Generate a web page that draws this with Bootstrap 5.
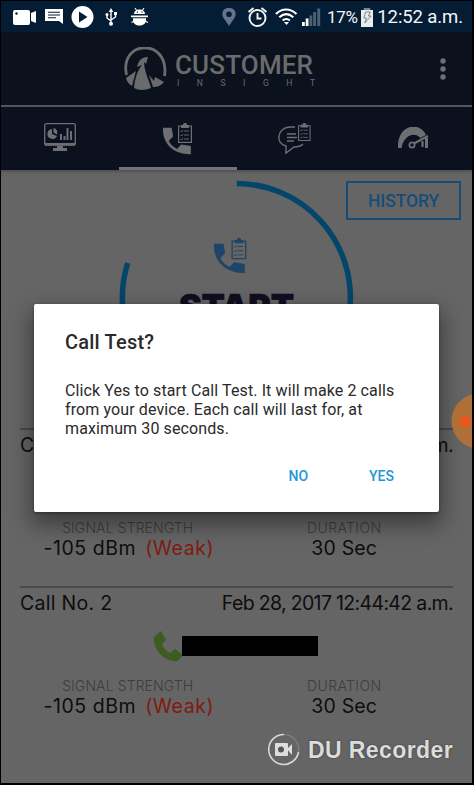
<!DOCTYPE html>
<html lang="en">
<head>
<meta charset="utf-8">
<meta name="viewport" content="width=device-width, initial-scale=1">
<title>Customer Insight</title>
<link href="https://cdn.jsdelivr.net/npm/bootstrap@5.3.0/dist/css/bootstrap.min.css" rel="stylesheet">
<style>
body{background:#000;font-family:Roboto,sans-serif;overflow:hidden}
svg{display:block;flex:none}
.phone{width:474px;height:785px;padding:1px 2px 2px 1px}
.screen{height:782px;background:#656565;overflow:hidden}
.statusbar{height:31px;background:#041d34;color:#f4f6f8;padding:2px 9px 0 12px}
.status-icons{width:314px;height:29px}
.battery-pct{font-size:17px;width:36px;letter-spacing:-.3px}
.clock{font-size:18.5px;letter-spacing:-.1px;white-space:nowrap;margin-left:4px}
.appbar{height:75px;background:#0c121d;border-bottom:2px solid #545a64}
.brand{margin-left:123px;color:#6a6b6d}
.brand-name{font-size:26px;line-height:22px;font-weight:500;letter-spacing:.15px;margin-top:7px}
.brand-sub{font-size:8.5px;line-height:9px;width:138px;margin-left:2px;margin-top:3px}
.tabs{height:63px;background:#0b111e;box-shadow:0 1px 3px #444}
.tabs .tab-item{color:#6d6f73;border-bottom:3px solid transparent}
.tabs .tab-item.active{border-bottom-color:#70737a}
.test-area{height:258px}
.history{width:115px;height:39px;margin:11px 11px 0 0;border:2px solid #154d78;color:#154d78;font-size:17.5px;font-weight:500;border-radius:0;background:none;padding:2px 0 0;letter-spacing:-.1px}
.dial{left:118px;top:10px;width:236px;height:240px}
.dial-label{font:900 34px/34px Inter,sans-serif;color:#0e0e20;top:120px;left:178px;letter-spacing:-.2px;-webkit-text-stroke:.6px #0e0e20}
.record{height:158px;margin:0 19px 0 19px;border-top:2px solid #4a4a4a;font-family:Inter,sans-serif;color:#0d0d0d;font-size:19.5px}
.record-head{height:31px;line-height:31px}
.call-no{letter-spacing:.3px}
.record-head .stamp{font-size:19.5px;letter-spacing:-.66px}
.number-row{height:58px;padding-left:134px}
.redacted{width:136px;height:20px;background:#000;margin-left:-1px}
.metric-label{font-size:14px;line-height:17px;font-weight:300;color:#3d3d3d;letter-spacing:.1px}
.duration .metric-label{letter-spacing:.4px}
.metric-value{line-height:25px;letter-spacing:.15px}
.signal .metric-value{letter-spacing:.55px;padding-left:2px}
.weak{color:#801a12;margin-left:3px}
.signal{width:216px}
.duration{width:218px}
.dialog-box{left:34px;top:304px;width:405px;height:208px;background:#fff;border-radius:2px;padding:26px 31px 0;box-shadow:0 10px 22px 3px rgba(0,0,0,.4),0 1px 3px rgba(0,0,0,.35);color:#2a2a2a}
.dialog-title{font-size:20px;line-height:25px;font-weight:500;margin:0 0 26px;letter-spacing:.2px}
.dialog-text{font-size:16px;line-height:19px;margin:0;white-space:nowrap;letter-spacing:.11px}
.dialog-box .btn{font-size:14px;font-weight:500;color:#2496d8;border:0;border-radius:0;padding:0;line-height:20px}
.dialog-actions{padding:28px 14px 0 0;gap:61px}
.bubble{left:451px;top:392px;width:21px;height:57px}
.watermark{left:267px;top:733px;color:#dcdcdc}
.watermark span{font:bold 23px/30px "Liberation Sans",sans-serif;letter-spacing:.4px;padding-top:1px;text-shadow:0 0 2px #333}
</style>
<script src="https://cdn.jsdelivr.net/npm/bootstrap@5.3.0/dist/js/bootstrap.bundle.min.js"></script>
</head>
<body>
<svg width="0" height="0" class="position-absolute">
<defs>
<g id="callicon"><path fill="currentColor" d="M0 5h9l1.500 9-4.500 4.500c2 4 4.500 6.500 8.500 8.500l4.500-4.500 10 1.500v8.500C12 33-1 22 0 5z"/></g>
<g id="clip" fill="none" stroke="currentColor"><path stroke-width="1.200" d="M.6 3h12.800v16.400H.6z"/><path fill="currentColor" stroke="none" d="M3 2h2c0-3 4-3 4 0h2v3H3z"/><path stroke-width=".9" d="M6 8h5M6 12h5M6 16h5M2.500 8l1 1 1.500-2M2.500 12l1 1 1.500-2M2.500 16l1 1 1.500-2"/></g>
</defs>
</svg>
<div class="phone position-relative overflow-hidden">
<div class="screen">
  <div class="statusbar d-flex align-items-center">
    <svg class="status-icons" viewBox="13 3 314 29">
      <g fill="#fff">
        <rect x="13" y="10" width="17" height="15" rx="2"/><path d="M31 13l5-2v12l-5-2z"/><circle cx="16.500" cy="13.500" r="1.200" fill="#041d34"/>
        <path d="M45 9h18v15l-4-3H45z"/><path d="M48 12.300h12M48 15h12M48 17.700h8" stroke="#041d34" stroke-width="1.100"/>
        <circle cx="82.500" cy="17" r="11"/><path d="M79 11.500l8.500 5.500-8.500 5.500z" fill="#041d34"/>
        <g fill="none" stroke="#fff" stroke-width="1.400"><path d="M111 11v12M107 15v3l4 3M115.500 13v4l-4.500 3"/></g>
        <path d="M111 8l2.300 4h-4.600z"/><circle cx="111" cy="23.800" r="2"/><circle cx="107" cy="14.500" r="1.500"/><path d="M114 12h3v3h-3z"/>
        <path d="M134 14c0-6 11-6 11 0zM131 15.500h17v1.800h-17zM133 18.200h13v2c0 7-13 7-13 0z"/><path d="M135 8l2 3M144 8l-2 3M131.500 22.500l3-1.500M148 22.500l-3-1.500" stroke="#fff" stroke-width="1.100"/><circle cx="137.500" cy="12" r=".7" fill="#041d34"/><circle cx="142" cy="12" r=".7" fill="#041d34"/>
      </g>
      <path fill="#64748a" fill-rule="evenodd" d="M229 8c-8 0-8 8-4 12l4 6 4-6c4-4 4-12-4-12zm0 3.500a2.800 2.800 0 1 1 0 5.600 2.800 2.800 0 0 1 0-5.600z"/>
      <g fill="none" stroke="#f4f4f4" stroke-width="1.900"><circle cx="257.500" cy="18" r="8"/><path d="M248.500 12l5-4M266.500 12l-5-4M257.500 13v5.500h4"/></g>
      <g fill="none" stroke="#fff" stroke-width="2.200"><path d="M276 14c6-6 14-6 20.500 0M279.300 17.300c4.500-4 9.500-4 14 0M282.700 20.500c2-2 5-2 7.200 0"/></g><path d="M284 22h5l-2.500 3z" fill="#fff"/>
      <path fill="#fff" d="M302 22h2.800v4H302zM305.700 18.500h2.800V26h-2.800z"/><path fill="#4d6176" d="M309.500 15.500h2.800V26h-2.800zM313.200 12h2.800v14h-2.800zM317.200 8.500h3V26h-3z"/>
    </svg>
    <span class="battery-pct">17%</span>
    <svg width="12" height="19" viewBox="0 0 13 19" preserveAspectRatio="none"><path d="M0 2h13v17H0z" fill="#e9ebec"/><path d="M3 0h7v2H3z" fill="#76848f"/><path d="M5 4h5L8 8h3l-7 7 2-5H3z" fill="none" stroke="#697786" stroke-width=".9"/></svg>
    <span class="clock">12:52 a.m.</span>
  </div>
  <header class="appbar d-flex align-items-center">
    <div class="brand d-flex align-items-start">
      <svg width="43" height="44" viewBox="124 47 43 44"><path d="M126.500 75C119 39 170 38 164.500 76" fill="none" stroke="currentColor" stroke-width="2.800"/><path fill="currentColor" d="M126 78l10-7-4 15c-3-2-5-4-6-8zM134 88c1-11 4-18 8-23l-5 2c2-8 6-10 11-10l-2 7-2-2c0 9 5 18 7 26-6 2.500-12 2.500-17 0zM153 87l-4-12 5 6 1-4 9 5c-3 4-7 5-11 5z"/></svg>
      <div class="ms-2"><div class="brand-name">CUSTOMER</div><div class="brand-sub d-flex justify-content-between"><span>I</span><span>N</span><span>S</span><span>I</span><span>G</span><span>H</span><span>T</span></div></div>
    </div>
    <svg class="ms-auto me-4" width="8" height="22" fill="#6e7073"><circle cx="3" cy="3" r="2.700"/><circle cx="3" cy="11" r="2.700"/><circle cx="3" cy="19" r="2.700"/></svg>
  </header>
  <nav class="tabs d-flex position-relative">
    <div class="tab-item col-3 d-flex justify-content-center align-items-center"><svg width="32" height="30" viewBox="0 0 32 30"><rect x=".7" y="1.700" width="30.600" height="21.500" rx="1.500" fill="none" stroke="currentColor" stroke-width="1.300"/><path fill="currentColor" d="M1 21h30v2.500H1zM13 24h6v2h4v3H9v-3h4zM8 7a5 5 0 1 0 5 7l-5-2zM9.500 6v4.500l3.500 2c1-3-.5-6-3.500-6.500zM16 12h2v6h-2zM19.500 14h2v4h-2zM22.500 6h2v12h-2zM26 9h2v9h-2z"/></svg></div>
    <div class="tab-item active col-3 d-flex justify-content-center align-items-center pt-1"><svg width="29" height="33" viewBox="0 0 29 33"><use href="#callicon" transform="scale(.96)"/><use href="#clip" x="15"/></svg></div>
    <div class="tab-item col-3 d-flex justify-content-center align-items-center pt-1"><svg width="34" height="32" viewBox="0 0 34 32"><path d="M17 4H12C-1 4-3 21 8 23v7l8-6c5 0 7-1 9-3" fill="none" stroke="currentColor" stroke-width="1.400"/><path d="M9 11h9M9 14.500h10M9 18h7" stroke="currentColor" stroke-width="1.300"/><use href="#clip" transform="translate(20 0) scale(.9)"/></svg></div>
    <div class="tab-item col-3 d-flex justify-content-center align-items-center pt-1"><svg width="31" height="24" viewBox="0 0 31 24"><path fill="currentColor" d="M0 21C-1-3 22-6 28 8l-6 3C18 5 6 7 3.500 21z"/><path d="M15 17l15-8M24.500 14v6" stroke="currentColor" stroke-width="2.200"/><path d="M28.500 11v10" stroke="currentColor" stroke-width="3"/><circle cx="14" cy="18" r="2.600" fill="#0b111e" stroke="currentColor" stroke-width="1.800"/></svg></div>
  </nav>
  <section class="test-area position-relative d-flex justify-content-end align-items-start">
    <button class="btn history">HISTORY</button>
    <svg class="dial position-absolute" viewBox="119 180 236 240"><path d="M236.700 183.500A114 114 0 1 1 127.700 263" fill="none" stroke="#034669" stroke-width="5.500"/><g color="#1c4567"><use href="#callicon" transform="translate(214 238.500) scale(1.060)"/><use href="#clip" transform="translate(231.500 238) scale(1.060)"/></g></svg>
    <div class="dial-label position-absolute">START</div>
  </section>
  <section class="record">
    <div class="record-head d-flex justify-content-between"><span class="call-no">Call No. 1</span><span class="stamp">Feb 28, 2017 12:43:12 a.m.</span></div>
    <div class="number-row"></div>
    <div class="d-flex text-center"><div class="signal"><div class="metric-label">SIGNAL STRENGTH</div><div class="metric-value">-105 dBm <span class="weak">(Weak)</span></div></div><div class="duration"><div class="metric-label">DURATION</div><div class="metric-value">30 Sec</div></div></div>
  </section>
  <section class="record">
    <div class="record-head d-flex justify-content-between"><span class="call-no">Call No. 2</span><span class="stamp">Feb 28, 2017 12:44:42 a.m.</span></div>
    <div class="number-row d-flex align-items-center pb-1"><svg width="29" height="32" viewBox="0 0 29 32"><path fill="#3e5b22" d="M0 7l7-6 5 9-4 4c1 4 4 7 8 9l5-4 8 6-5 6C12 33-2 20 0 7z"/></svg><div class="redacted"></div></div>
    <div class="d-flex text-center"><div class="signal"><div class="metric-label">SIGNAL STRENGTH</div><div class="metric-value">-105 dBm <span class="weak">(Weak)</span></div></div><div class="duration"><div class="metric-label">DURATION</div><div class="metric-value">30 Sec</div></div></div>
  </section>
</div>
<div class="dialog-box position-absolute">
  <h1 class="dialog-title">Call Test?</h1>
  <p class="dialog-text">Click Yes to start Call Test. It will make 2 calls<br>from your device. Each call will last for, at<br>maximum 30 seconds.</p>
  <div class="dialog-actions d-flex justify-content-end"><button class="btn">NO</button><button class="btn">YES</button></div>
</div>
<svg class="bubble position-absolute" viewBox="0 0 21 57"><circle cx="28" cy="29" r="27.500" fill="#ae6f38"/><circle cx="14" cy="29.500" r="5.500" fill="#ef5518"/></svg>
<div class="watermark position-absolute d-flex align-items-center"><svg width="33" height="33" viewBox="0 0 33 33"><path d="M17 1.500A15 15 0 1 0 31.500 19" fill="none" stroke="#d8d8d8" stroke-width="1.600"/><path d="M17 1.500A15 15 0 0 1 31.500 19" fill="none" stroke="#808080" stroke-width="1.300"/><rect x="8" y="10" width="13" height="13" rx="1" fill="#ddd"/><path d="M20 16l5-5v11z" fill="#ddd"/><circle cx="14" cy="16.500" r="3" fill="#555"/></svg><span class="ms-2">DU Recorder</span></div>
</div>
</body>
</html>
